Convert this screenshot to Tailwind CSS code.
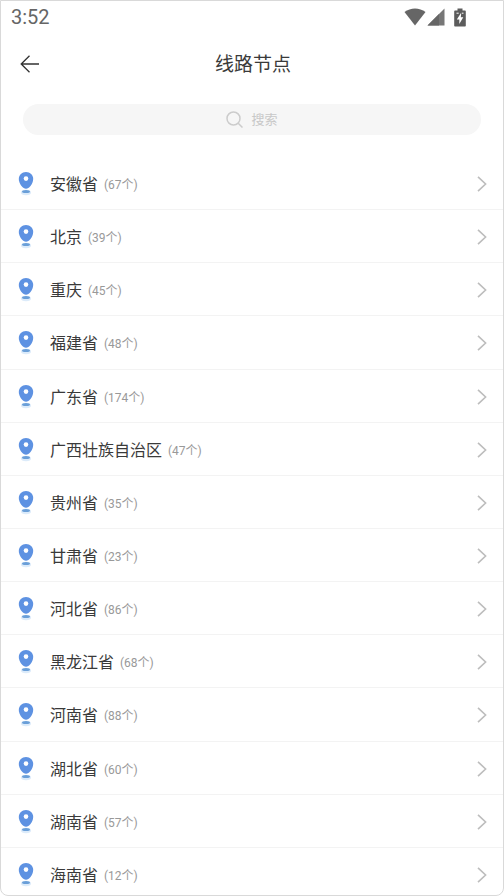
<!DOCTYPE html>
<html lang="zh-CN">
<head>
<meta charset="utf-8">
<meta name="viewport" content="width=device-width, initial-scale=1">
<title>线路节点</title>
<script src="https://cdn.jsdelivr.net/npm/@tailwindcss/browser@4"></script>
</head>
<body class="h-screen overflow-hidden bg-white font-[Roboto,'Noto_Sans_CJK_SC',sans-serif] text-[#3a3a3a]">
<svg class="hidden" aria-hidden="true">
  <symbol id="pin" viewBox="0 0 16 24">
    <ellipse cx="8" cy="20.500" rx="5" ry="2.800" fill="#dcebfa"/>
    <ellipse cx="8" cy="19.500" rx="4" ry="1.600" fill="#6a9fd8"/>
    <path d="M8 0C3.900 0 .8 3.100.8 7c0 4.700 4.200 9.800 7.200 9.800S15.200 11.700 15.200 7C15.200 3.100 12.100 0 8 0Z" fill="#5e92e2"/>
    <circle cx="8" cy="6.600" r="2.300" fill="#fff"/>
  </symbol>
  <symbol id="chevron" viewBox="0 0 10 16">
    <path d="M1 .8 8.600 8 1 15.200" fill="none" stroke="#bdbdbd" stroke-width="1.600"/>
  </symbol>
</svg>
<div class="flex h-full flex-col overflow-hidden rounded-b-lg border border-[#d9d9d9]">
  <div class="flex h-8 shrink-0 items-center justify-between pr-[37px] pl-[10px] text-[#666666]">
    <span class="text-[20px] leading-8">3:52</span>
    <div class="flex items-center">
      <svg class="h-[18px] w-[22px]" viewBox="0 0 22 18" fill="currentColor" aria-hidden="true"><path d="M.5 4C6.500-.8 15.500-.8 21.500 4L11 17.500Z"/></svg>
      <svg class="ml-[1px] h-[18px] w-[18px]" viewBox="0 0 18 18" aria-hidden="true"><path d="M17.500.5v17H.5Z" fill="#777"/><path d="M12 6v11.500H.5Z" fill="#666"/></svg>
      <svg class="ml-[9px] h-[19px] w-3" viewBox="0 0 12 19" aria-hidden="true"><path d="M3.500.5h5v2H11q.8 0 .8.8v14.400q0 .8-.8.8H1q-.8 0-.8-.8V3.300q0-.8.8-.8h2.500Z" fill="#5c5c5c"/><path d="M2.500 5.200h2.200M8 5.200h1.500" stroke="#fff"/><path d="M7.300 4.500 2.800 11.500h2.500V16l4-6.800H6.800Z" fill="#fff"/></svg>
    </div>
  </div>
  <header class="grid h-[61px] shrink-0 grid-cols-[56px_1fr_54px] items-center">
    <button type="button" aria-label="返回" class="flex h-10 items-center pl-[19px]">
      <svg class="h-[18px] w-5" viewBox="0 0 20 18" fill="none" stroke="#333" stroke-width="1.300" aria-hidden="true"><path d="M9.500.8 1.200 9l8.300 8.200M1.200 9H19"/></svg>
    </button>
    <h1 class="pt-[2px] text-center text-[19px] leading-7">线路节点</h1>
  </header>
  <label class="mx-[22px] mt-[10px] flex h-[31px] shrink-0 items-center justify-center gap-2 rounded-full bg-[#f6f6f6]">
    <svg class="h-[17px] w-[17px]" viewBox="0 0 17 17" fill="none" stroke="#cccccc" stroke-width="1.500" aria-hidden="true"><circle cx="7.500" cy="7.500" r="6.500"/><path d="m12.200 12.200 4.300 4.300"/></svg>
    <input type="text" placeholder="搜索" aria-label="搜索" class="field-sizing-content h-[31px] pb-[2px] text-[13px] outline-none placeholder:text-[#c8c8c8]">
  </label>
  <ul id="list" class="mt-[22px] -mb-[6px] grid flex-1 auto-rows-fr"></ul>
</div>
<template id="row">
  <li class="flex min-h-[52px] border-b border-[#f3f3f3]">
    <a href="#" class="flex flex-1 items-center pt-[2px] pr-4 pl-[17px]">
      <svg class="h-6 w-4" aria-hidden="true"><use href="#pin"/></svg>
      <span data-name class="ml-4 pt-[2px] text-[16px] leading-6"></span>
      <span data-count class="ml-[6px] pt-[2px] text-[12px] leading-6 text-[#999999]"></span>
      <svg class="ml-auto h-4 w-[10px]" aria-hidden="true"><use href="#chevron"/></svg>
    </a>
  </li>
</template>
<script>
const nodes = [["安徽省",67],["北京",39],["重庆",45],["福建省",48],["广东省",174],["广西壮族自治区",47],["贵州省",35],["甘肃省",23],["河北省",86],["黑龙江省",68],["河南省",88],["湖北省",60],["湖南省",57],["海南省",12]];
const list = document.getElementById("list");
const template = document.getElementById("row");
for (const [name, count] of nodes) {
  const row = template.content.cloneNode(true);
  row.querySelector("[data-name]").textContent = name;
  row.querySelector("[data-count]").textContent = `(${count}个)`;
  list.append(row);
}
</script>
</body>
</html>
